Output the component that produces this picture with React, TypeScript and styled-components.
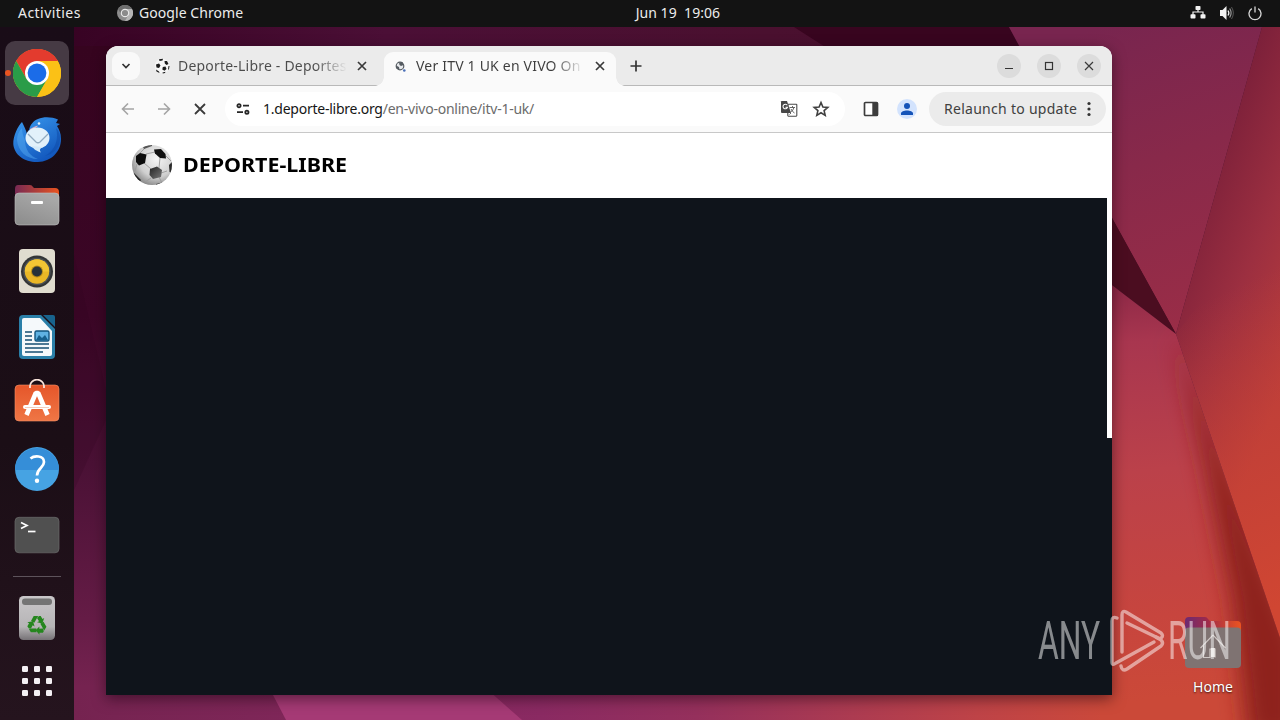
import React from "react";
import styled, { createGlobalStyle } from "styled-components";

const GlobalStyle = createGlobalStyle`
  * {
    box-sizing: border-box;
  }

  body {
    margin: 0;
    overflow: hidden;
    font-family: "Noto Sans", "Open Sans", sans-serif;
  }

  svg {
    display: block;
    flex-shrink: 0;
  }
`;

const Wallpaper = () => (
  <Backdrop viewBox="0 0 1280 720" preserveAspectRatio="none">
    <defs>
      <linearGradient id="wpTop" x1="0" x2="1" y1="0" y2="0">
        <stop offset="0" stopColor="#33001f" />
        <stop offset="0.3" stopColor="#4b0f36" />
        <stop offset="0.6" stopColor="#4a102f" />
        <stop offset="1" stopColor="#450f2b" />
      </linearGradient>
      <linearGradient id="wpLeft" x1="0" x2="0" y1="0" y2="1">
        <stop offset="0" stopColor="#36041f" />
        <stop offset="0.4" stopColor="#3b0626" />
        <stop offset="0.62" stopColor="#4a1135" />
        <stop offset="0.85" stopColor="#651c46" />
        <stop offset="0.95" stopColor="#752350" />
        <stop offset="1" stopColor="#752350" />
      </linearGradient>
      <linearGradient id="wpBottom" gradientUnits="userSpaceOnUse" x1="74" x2="1112" y1="0" y2="0">
        <stop offset="0" stopColor="#752350" />
        <stop offset="0.04" stopColor="#772452" />
        <stop offset="0.45" stopColor="#8a2a62" />
        <stop offset="0.6" stopColor="#95305c" />
        <stop offset="0.75" stopColor="#ac3b51" />
        <stop offset="0.87" stopColor="#be4347" />
        <stop offset="1" stopColor="#cb493a" />
      </linearGradient>
      <linearGradient id="wpPanel" gradientUnits="userSpaceOnUse" x1="1090" y1="30" x2="1190" y2="330">
        <stop offset="0" stopColor="#78254f" />
        <stop offset="0.45" stopColor="#88294a" />
        <stop offset="1" stopColor="#9a2d47" />
      </linearGradient>
      <linearGradient id="wpEast" gradientUnits="userSpaceOnUse" x1="1195" y1="190" x2="1340" y2="250">
        <stop offset="0" stopColor="#7c203a" />
        <stop offset="0.5" stopColor="#9c2f40" />
        <stop offset="1" stopColor="#b83c3c" />
      </linearGradient>
      <linearGradient id="wpEastLow" gradientUnits="userSpaceOnUse" x1="1185" y1="310" x2="1315" y2="590">
        <stop offset="0" stopColor="#cc4433" stopOpacity="0" />
        <stop offset="1" stopColor="#d04632" />
      </linearGradient>
      <linearGradient id="wpSouth" gradientUnits="userSpaceOnUse" x1="1120" y1="284" x2="1150" y2="700">
        <stop offset="0" stopColor="#8c2846" />
        <stop offset="0.14" stopColor="#a8364f" />
        <stop offset="0.45" stopColor="#bb414a" />
        <stop offset="0.8" stopColor="#c7453e" />
        <stop offset="1" stopColor="#cb4938" />
      </linearGradient>
      <clipPath id="southClip">
        <path d="M1100 276L1176 334L1280 638V720H1100Z" />
      </clipPath>
      <filter id="soften" x="-50%" y="-20%" width="200%" height="140%">
        <feGaussianBlur stdDeviation="11" />
      </filter>
    </defs>
    <rect width="1280" height="720" fill="url(#wpTop)" />
    <rect x="74" y="46" width="60" height="674" fill="url(#wpLeft)" />
    <path d="M74 255L106 390V420L74 490Z" fill="#2c031d" opacity="0.2" />
    <rect x="74" y="690" width="1206" height="30" fill="url(#wpBottom)" />
    <path d="M273 695L286 720H522L488 690H271Z" fill="#a53a75" />
    <path d="M794 27L830 50H1022L1009 27Z" fill="#38051f" />
    <path d="M1009 27H1262L1176 334L1112 218Z" fill="url(#wpPanel)" />
    <path d="M1262 27H1280V638L1176 334Z" fill="url(#wpEast)" />
    <path d="M1176 334L1280 200V638Z" fill="url(#wpEastLow)" />
    <path d="M1100 196L1176 334L1100 276Z" fill="#4b0d20" />
    <path d="M1100 276L1176 334L1280 638V720H1100Z" fill="url(#wpSouth)" />
    <g clipPath="url(#southClip)">
      <path d="M1176 334L1300 650V740H1248L1232 600L1206 470Z" fill="#8e231b" filter="url(#soften)" />
    </g>
  </Backdrop>
);

const ChromeIcon = ({ size = 48 }: { size?: number }) => (
  <svg width={size} height={size} viewBox="0 0 48 48">
    <circle cx="24" cy="24" r="24" fill="#fbc116" />
    <path d="M24 24L3.2 12A24 24 0 0 1 44.8 12Z" fill="#e33b2e" />
    <path d="M24 12H44.8A24 24 0 0 0 3.2 12L13.6 30Z" fill="#e33b2e" />
    <path d="M3.2 12A24 24 0 0 0 24 48L34.4 30L24 24L13.6 30Z" fill="#2a9c48" />
    <path d="M24 48A24 24 0 0 0 44.8 12H24L34.4 30Z" fill="#fbc116" />
    <circle cx="24" cy="24" r="12" fill="#fff" />
    <circle cx="24" cy="24" r="9.4" fill="#1b6ce8" />
  </svg>
);

const GreyChromeIcon = () => (
  <svg width="16" height="16" viewBox="0 0 16 16">
    <circle cx="8" cy="8" r="8" fill="#8d8d8d" />
    <path d="M8 4H15A8 8 0 0 0 1 4L4.6 10Z" fill="#6e6e6e" />
    <path d="M8 16A8 8 0 0 0 15 4H8L11.4 10Z" fill="#b5b5b5" />
    <circle cx="8" cy="8" r="4.3" fill="#e8e8e8" />
    <circle cx="8" cy="8" r="3.1" fill="#8b8b8b" />
  </svg>
);

const ThunderbirdIcon = () => (
  <svg width="48" height="48" viewBox="0 -1 48 48">
    <defs>
      <linearGradient id="tb" x1="0" x2="0.6" y1="0" y2="1">
        <stop offset="0" stopColor="#3b9cf0" />
        <stop offset="1" stopColor="#1257bd" />
      </linearGradient>
    </defs>
    <path
      d="M9 6C5 10 0 20 .3 28C1 39 12 46.500 25 46C38 45.500 48 36 48 23C48 17 46 13 44 10L47 8L43 7L45 3.500C39 1 31 .5 25 3C20 5 17 9 16 14C15 15 14.500 16 14 18C13 14 11 10 9 6Z"
      fill="url(#tb)"
    />
    <path d="M4 24C5 35 13 43 25 43C17 40 12 34 12 24C10 20 9 16 9 12C6 15 4 19 4 24Z" fill="#5cb0f5" opacity="0.45" />
    <path d="M43 12C46 22 43 34 32 40C41 38 47 31 47 23C47 18 46 15 43 12Z" fill="#0e4aa8" opacity="0.5" />
    <path d="M17 13C20 12 23 9 25 10C22 12 21 14 17 15Z" fill="#ddb1c9" />
    <circle cx="26" cy="7.500" r="1.300" fill="#e3f1fb" />
    <ellipse cx="24.500" cy="22" rx="12" ry="10.500" fill="#e2f1fa" />
    <path d="M19 30C21 34 24 35 28 36.500C26 33.500 27 32.500 30 31Z" fill="#d2e9f8" />
    <path d="M15 18L23 26Q25 27.500 27 26L35 18" fill="none" stroke="#91abc0" strokeWidth="1.300" />
  </svg>
);

const FolderIcon = () => (
  <svg width="48" height="48" viewBox="0 0 48 48">
    <defs>
      <linearGradient id="fBack" x1="0" x2="1">
        <stop offset="0" stopColor="#772953" />
        <stop offset="1" stopColor="#e95420" />
      </linearGradient>
      <linearGradient id="fFront" x1="0" x2="0.5" y1="1" y2="0">
        <stop offset="0" stopColor="#8b8b8b" />
        <stop offset="1" stopColor="#a8a8a8" />
      </linearGradient>
    </defs>
    <path d="M5 4H17Q19 4 20 6L21 7H42Q46 7 46 11V20H2V8Q2 4 5 4Z" fill="url(#fBack)" />
    <rect x="2" y="12" width="44" height="32" rx="4" fill="url(#fFront)" stroke="#c0c0c0" strokeWidth="0.600" />
    <rect x="18" y="20" width="12" height="3" rx="1" fill="#fff" />
  </svg>
);

const SpeakerIcon = () => (
  <svg width="48" height="48" viewBox="0 0 48 48">
    <rect x="6" y="2" width="36" height="44" rx="4" fill="#e0dccf" />
    <circle cx="24" cy="24.500" r="16" fill="#333536" />
    <circle cx="24" cy="24.500" r="13.800" fill="#4b5054" />
    <circle cx="24" cy="24.500" r="12.200" fill="#eab726" />
    <path d="M11.800 24.500A12.200 12.200 0 0 1 36.200 24.500Z" fill="#f2c534" />
    <circle cx="24" cy="24.500" r="6" fill="#b38a1b" />
    <circle cx="24" cy="24.500" r="5" fill="#27323a" />
  </svg>
);

const WriterIcon = () => (
  <svg width="48" height="48" viewBox="0 0 48 48">
    <path d="M10 2H28L42 16V42Q42 46 38 46H10Q6 46 6 42V6Q6 2 10 2Z" fill="#2a7fa8" />
    <path d="M11 5H27L39 18V41Q39 43 37 43H11Q9 43 9 41V7Q9 5 11 5Z" fill="#f5f9fb" />
    <path d="M30 2H40Q42 2 42 4V14Z" fill="#18638d" />
    <rect x="22" y="18" width="14" height="10" rx="1.500" fill="#5fb2e2" stroke="#12557f" strokeWidth="1.400" />
    <path d="M23 27L26 22L29 25L32 22L35 27Z" fill="#17608c" />
    <path d="M12 19H19M12 23H19M12 27H19M12 31H36M12 35H36M12 39H30" stroke="#164f73" strokeWidth="1.700" />
  </svg>
);

const SoftwareIcon = () => (
  <svg width="48" height="48" viewBox="0 0 48 48">
    <defs>
      <linearGradient id="bag" x1="0" x2="0" y1="0" y2="1">
        <stop offset="0" stopColor="#e5562a" />
        <stop offset="1" stopColor="#ef7645" />
      </linearGradient>
    </defs>
    <rect x="2" y="6" width="44" height="36" rx="4" fill="url(#bag)" stroke="#f39068" strokeWidth="0.600" />
    <path d="M17 9V7A7 6.300 0 0 1 31 7V9" fill="none" stroke="#f8e3da" strokeWidth="1.800" />
    <path d="M13.500 36L22.800 14H25.200L34.500 36" fill="none" stroke="#fff" strokeWidth="4.600" strokeLinejoin="bevel" />
    <rect x="10" y="26" width="28" height="4" rx="2" fill="#fff" />
    <path d="M12 28.500H36" stroke="#f1b7a0" strokeWidth="0.700" />
  </svg>
);

const HelpIcon = () => (
  <svg width="48" height="48" viewBox="0 0 48 48">
    <circle cx="24" cy="24" r="22" fill="#46a3e3" />
    <path d="M2 25A22 22 0 0 1 46 25Z" fill="#358ed8" />
    <path d="M17.500 13.500C21 10.500 31 10 31 17C31 23 24 23 24 30.500" fill="none" stroke="#fff" strokeWidth="2.700" />
    <circle cx="24" cy="35.800" r="2.200" fill="#fff" />
  </svg>
);

const TerminalIcon = () => (
  <svg width="48" height="48" viewBox="0 0 48 48">
    <rect x="2" y="6.300" width="44" height="35.500" rx="4" fill="#505050" stroke="#6c6c6c" strokeWidth="0.700" />
    <path d="M8 11.500L14 14.500L8 17.500" fill="none" stroke="#fff" strokeWidth="1.700" />
    <path d="M15 20.500H22.500" stroke="#fff" strokeWidth="1.700" />
  </svg>
);

const TrashIcon = () => (
  <svg width="48" height="48" viewBox="0 0 48 48">
    <defs>
      <linearGradient id="bin" x1="0" x2="0" y1="0" y2="1">
        <stop offset="0" stopColor="#c9c7c9" />
        <stop offset="0.7" stopColor="#b6b4b6" />
        <stop offset="1" stopColor="#767276" />
      </linearGradient>
    </defs>
    <rect x="6" y="1" width="36" height="44" rx="4.500" fill="url(#bin)" />
    <rect x="9" y="3.500" width="30" height="6.500" rx="3" fill="#747474" />
    <g transform="translate(24 30)" fill="#25861e">
      {[0, 120, 240].map((angle) => (
        <g key={angle} transform={`rotate(${angle})`}>
          <path d="M-6 -4L-3.300 -9H1.200L-2.700 -2.300Z" />
          <path d="M2 -9H3.700L5.500 -6L7.200 -7L5.300 -1.500L0 -2.800L2 -3.800L0 -7Z" />
        </g>
      ))}
    </g>
  </svg>
);

const AppsIcon = () => (
  <svg width="30" height="30" viewBox="0 0 30 30" fill="#f4f0f4">
    {[0, 12, 24].map((y) =>
      [0, 12, 24].map((x) => (
        <rect key={`${x}-${y}`} x={x} y={y} width="6" height="6" rx="1.300" />
      ))
    )}
  </svg>
);

const FootballIcon = () => (
  <svg width="42" height="42" viewBox="0 0 42 42">
    <defs>
      <radialGradient id="ball" cx="0.62" cy="0.35" r="0.75">
        <stop offset="0" stopColor="#f5f5f5" />
        <stop offset="0.6" stopColor="#cfcfcf" />
        <stop offset="1" stopColor="#777" />
      </radialGradient>
      <linearGradient id="patch" x1="0" x2="1" y1="0" y2="1">
        <stop offset="0" stopColor="#222" />
        <stop offset="1" stopColor="#777" />
      </linearGradient>
      <clipPath id="ballClip">
        <circle cx="21" cy="21" r="20" />
      </clipPath>
    </defs>
    <circle cx="21" cy="21" r="20" fill="url(#ball)" />
    <g clipPath="url(#ballClip)">
      <path
        d="M15 10L24 8M13 19L20 25M6 20L4 27M29 14L28 24M35 12L40 17M30 29L36 27M20 34L14 38M28 33L31 39M9 9L14 4"
        stroke="#9a9a9a"
        strokeWidth="0.900"
      />
      <path d="M5 12L9 9L15.500 10.500L14 19L8 21.500L5 18Z" fill="#0c0c0c" />
      <path d="M23 5.500L30 5L34.500 10L35 14.500L29 14L24 9.500Z" fill="#111" />
      <path d="M19 25L26 22.500L31 26L30 33L22 35L18.500 31Z" fill="url(#patch)" />
      <path d="M38 21L41 18V29L38.500 28Z" fill="#2c2c2c" />
      <path d="M3 29L10 36L8 39L1 32Z" fill="#222" />
      <path d="M12 3L17 1L21 0V2L13 5Z" fill="#555" />
      <path d="M25 40L31 38.500V42H25Z" fill="#444" />
    </g>
  </svg>
);

const SmallBallIcon = () => (
  <svg width="16" height="16" viewBox="0 0 16 16">
    <circle cx="8" cy="8" r="7.300" fill="#f6f6f6" />
    <g fill="#1c1c1c">
      <path d="M2 6.500L5 5.500L6.500 7.500L5 10L2.500 9.500Z" />
      <path d="M5 1.300L9 .8L8.500 2.500L5.500 3Z" />
      <path d="M10.500 3L13 3L14.500 6L12.500 7L10.800 5.500Z" />
      <path d="M8.800 9L11.500 8.500L12.500 11L10.500 12.800L8.300 11.500Z" />
      <path d="M14.500 8L15.500 8L15 11L14 12Z" />
      <path d="M2 11.500L5 13.500L5.500 15L2.500 13.500Z" />
      <path d="M8.500 14.500L11.500 13.800L11 15L8.800 15.500Z" />
    </g>
  </svg>
);

const GlobeIcon = () => (
  <svg width="12" height="12" viewBox="0 0 12 12">
    <circle cx="5" cy="6" r="3.800" fill="#e8eaed" stroke="#555b61" strokeWidth="1.200" />
    <path d="M1 5.500L4 7L4.500 9.500L1.500 8.500ZM4 2.500L7.500 2L8.500 5L6 6L4.500 5Z" fill="#555b61" />
    <circle cx="9.300" cy="10.500" r="1.300" fill="#4a6fb8" />
  </svg>
);

const CrossIcon = ({ size, width = 1.7 }: { size: number; width?: number }) => (
  <svg width={size} height={size} viewBox={`0 0 ${size} ${size}`}>
    <path d={`M1 1L${size - 1} ${size - 1}M${size - 1} 1L1 ${size - 1}`} stroke="#3a3a3a" strokeWidth={width} />
  </svg>
);

const ArrowIcon = ({ flip }: { flip?: boolean }) => (
  <svg width="14" height="14" viewBox="0 0 14 14">
    <path
      d="M13 7H2M7 1.500L1.500 7L7 12.500"
      transform={flip ? "rotate(180 7 7)" : undefined}
      fill="none"
      stroke="#a4a4a4"
      strokeWidth="1.600"
    />
  </svg>
);

const TuneIcon = () => (
  <svg width="14" height="12" viewBox="0 0 14 12" fill="none" stroke="#262626" strokeWidth="1.800">
    <circle cx="3" cy="2.700" r="1.600" />
    <path d="M7 2.700H13M1 9.200H7" />
    <circle cx="10.900" cy="9.200" r="1.600" />
  </svg>
);

const TranslateIcon = () => (
  <svg width="18" height="18" viewBox="0 0 18 18">
    <rect x="7.800" y="4.200" width="9" height="12" rx="0.600" fill="#fff" stroke="#4a4a4a" strokeWidth="1.100" />
    <path d="M1.500 1H7L11 13H2Q1 13 1 12V1.500Z" fill="#474747" />
    <path d="M7.300 5.300A2.300 2.300 0 1 0 7.500 7.300H5.500" fill="none" stroke="#fff" strokeWidth="1.100" />
    <path d="M9.500 7.500H15M12.500 6V7.500M14 7.500Q13 11 10.500 12M11 9Q12.500 12 14.500 13M9.500 14.500L11 13" fill="none" stroke="#555" strokeWidth="0.900" />
  </svg>
);

const StarIcon = () => (
  <svg width="18" height="18" viewBox="0 0 18 18">
    <path
      d="M9 2.500L10.900 7L15.800 7.400L12.100 10.600L13.200 15.400L9 12.800L4.800 15.400L5.900 10.600L2.200 7.400L7.100 7Z"
      fill="none"
      stroke="#404040"
      strokeWidth="1.600"
    />
  </svg>
);

const SidePanelIcon = () => (
  <svg width="16" height="16" viewBox="0 0 16 16">
    <rect x="1.500" y="1.500" width="13" height="13" rx="1" fill="#fff" stroke="#3c3c3c" strokeWidth="1.700" />
    <rect x="9.300" y="1.500" width="5.200" height="13" fill="#3c3c3c" />
  </svg>
);

const AvatarIcon = () => (
  <svg width="20" height="20" viewBox="0 0 20 20">
    <circle cx="10" cy="10" r="10" fill="#d3e3fd" />
    <circle cx="10" cy="7" r="3" fill="#1453b8" />
    <path d="M4 16V14.500C4 12.500 7 11.500 10 11.500S16 12.500 16 14.500V16Z" fill="#1453b8" />
  </svg>
);

const NetworkIcon = () => (
  <svg width="16" height="14" viewBox="0 0 16 14">
    <path d="M8 3V6M3 9V6H13V9" fill="none" stroke="#f2f2f2" strokeWidth="1.200" />
    <g fill="#f2f2f2">
      <rect x="5.500" y="0" width="5" height="4" rx="0.800" />
      <rect x="0.500" y="8.300" width="5" height="4.300" rx="0.800" />
      <rect x="10.500" y="8.300" width="5" height="4.300" rx="0.800" />
    </g>
  </svg>
);

const VolumeIcon = () => (
  <svg width="16" height="16" viewBox="0 0 16 16">
    <path d="M1 5H3.500L7.500 1V15L3.500 11H1Z" fill="#f2f2f2" />
    <path d="M9 5.500Q10.700 8 9 10.500" fill="none" stroke="#f2f2f2" strokeWidth="1.300" />
    <path d="M10.700 3.500Q13.500 8 10.700 12.500" fill="none" stroke="#9a9a9a" strokeWidth="1.200" />
    <path d="M12.500 2Q16.200 8 12.500 14" fill="none" stroke="#555" strokeWidth="1" />
  </svg>
);

const PowerIcon = () => (
  <svg width="14" height="15" viewBox="0 0 14 15" fill="none" stroke="#d8d8d8" strokeWidth="1.300">
    <path d="M3.800 2.600A6 6 0 1 0 10.200 2.600M7 0.500V6.500" />
  </svg>
);

const dockItems = [
  { name: "chrome", icon: <ChromeIcon />, active: true },
  { name: "thunderbird", icon: <ThunderbirdIcon /> },
  { name: "files", icon: <FolderIcon /> },
  { name: "rhythmbox", icon: <SpeakerIcon /> },
  { name: "writer", icon: <WriterIcon /> },
  { name: "software", icon: <SoftwareIcon /> },
  { name: "help", icon: <HelpIcon /> },
  { name: "terminal", icon: <TerminalIcon /> },
];

const App = () => {
  return (
    <Desktop>
      <GlobalStyle />
      <Wallpaper />

      <TopBar>
        <TopText $spacing={0.45}>Activities</TopText>
        <AppMenu>
          <GreyChromeIcon />
          <TopText $spacing={0.06}>Google Chrome</TopText>
        </AppMenu>
        <Clock>
          <TopText $spacing={0.05}>Jun 19&nbsp; 19:06</TopText>
        </Clock>
        <Tray>
          <NetworkIcon />
          <VolumeIcon />
          <PowerIcon />
        </Tray>
      </TopBar>

      <Workspace>
        <Dock>
          {dockItems.map((item) => (
            <DockItem key={item.name} $active={item.active}>
              {item.icon}
            </DockItem>
          ))}
          <DockDivider />
          <DockItem>
            <TrashIcon />
          </DockItem>
          <AppsButton>
            <AppsIcon />
          </AppsButton>
        </Dock>

        <Browser>
          <TabStrip>
            <TabSearch>
              <svg width="10" height="6" viewBox="0 0 10 6">
                <path d="M1.500 1L5 4.500L8.500 1" fill="none" stroke="#333" strokeWidth="1.700" />
              </svg>
            </TabSearch>
            <Tab>
              <SmallBallIcon />
              <TabTitle $color="#4b4b4b">Deporte-Libre - Deportes</TabTitle>
              <CrossIcon size={10} />
            </Tab>
            <Tab $active>
              <GlobeIcon />
              <TabTitle $color="#3c3c3c">Ver ITV 1 UK en VIVO On</TabTitle>
              <CrossIcon size={10} />
            </Tab>
            <NewTab>
              <svg width="12" height="12" viewBox="0 0 12 12">
                <path d="M6 0.500V11.500M0.500 6H11.500" stroke="#333" strokeWidth="1.700" />
              </svg>
            </NewTab>
            <WindowControls>
              <ControlButton>
                <svg width="10" height="10" viewBox="0 0 10 10">
                  <path d="M1 7.500H9" stroke="#333" strokeWidth="1.100" />
                </svg>
              </ControlButton>
              <ControlButton>
                <svg width="10" height="10" viewBox="0 0 10 10">
                  <rect x="1.500" y="1.500" width="7" height="7" fill="none" stroke="#333" strokeWidth="1.200" />
                </svg>
              </ControlButton>
              <ControlButton>
                <CrossIcon size={10} width={1.2} />
              </ControlButton>
            </WindowControls>
          </TabStrip>

          <Toolbar>
            <NavButtons>
              <ArrowIcon />
              <ArrowIcon flip />
              <CrossIcon size={12} width={1.8} />
            </NavButtons>
            <Omnibox>
              <TuneIcon />
              <Url>
                1.deporte-libre.org<UrlPath>/en-vivo-online/itv-1-uk/</UrlPath>
              </Url>
              <TranslateIcon />
              <StarIcon />
            </Omnibox>
            <ToolbarActions>
              <SidePanelIcon />
              <AvatarIcon />
            </ToolbarActions>
            <RelaunchButton>
              Relaunch to update
              <svg width="4" height="16" viewBox="0 0 4 16" fill="#333">
                <circle cx="2" cy="2.500" r="1.600" />
                <circle cx="2" cy="8" r="1.600" />
                <circle cx="2" cy="13.500" r="1.600" />
              </svg>
            </RelaunchButton>
          </Toolbar>

          <SiteHeader>
            <FootballIcon />
            <SiteName>DEPORTE-LIBRE</SiteName>
          </SiteHeader>
          <Page>
            <ScrollThumb />
          </Page>
        </Browser>
      </Workspace>

      <HomeShortcut>
        <svg width="56" height="52" viewBox="0 0 56 52">
          <defs>
            <linearGradient id="homeBack" x1="0" x2="1">
              <stop offset="0" stopColor="#6c2a72" />
              <stop offset="0.4" stopColor="#9e2a4a" />
              <stop offset="1" stopColor="#ec5420" />
            </linearGradient>
          </defs>
          <path d="M4 0H20Q22 0 23 2L25 4H52Q56 4 56 8V20H0V4Q0 0 4 0Z" fill="url(#homeBack)" />
          <rect y="10.500" width="56" height="40.500" rx="4" fill="#7f7372" />
          <path d="M15.500 31L28 18L40.500 31M18.500 28.500V40.500H25V32H30V40.500" fill="none" stroke="#cfc8c6" strokeWidth="1.200" />
          <rect x="26" y="31" width="4" height="9" fill="#e2dcda" />
        </svg>
        <HomeLabel>Home</HomeLabel>
      </HomeShortcut>

      <Watermark>
        <WatermarkWord>ANY</WatermarkWord>
        <svg width="56" height="64" viewBox="0 0 56 64" fill="none" stroke="#fff" strokeWidth="3.400" strokeLinejoin="round" strokeLinecap="round">
          <path d="M7 9Q2 7 2 12V53Q2 57 6 54L44 33" />
          <path d="M12 43V6Q12 1 16 3L51 24Q54 27 51 29Q49 30 46 28L17 14" />
          <path d="M11 57Q12 63 17 60L51 37Q54 34 51 31L46 28" />
        </svg>
        <WatermarkWord>RUN</WatermarkWord>
      </Watermark>
    </Desktop>
  );
};

const Desktop = styled.div`
  position: relative;
  display: flex;
  flex-direction: column;
  width: 1280px;
  height: 720px;
  overflow: hidden;
`;

const Backdrop = styled.svg`
  position: absolute;
  inset: 0;
  width: 100%;
  height: 100%;
`;

const TopBar = styled.header`
  position: relative;
  display: grid;
  grid-template-columns: 99px 1fr 1fr 1fr;
  align-items: center;
  height: 27px;
  padding: 0 18px 1px;
  background: #131313;
`;

const TopText = styled.span<{ $spacing: number }>`
  color: #ececec;
  font-size: 14px;
  line-height: 26px;
  letter-spacing: ${(p) => p.$spacing}px;
  white-space: nowrap;
`;

const AppMenu = styled.div`
  display: flex;
  align-items: center;
  gap: 6px;
`;

const Clock = styled.div`
  padding-left: 137px;
`;

const Tray = styled.div`
  display: flex;
  justify-content: flex-end;
  align-items: center;
  gap: 13px;
`;

const Workspace = styled.main`
  position: relative;
  display: flex;
  flex: 1;
  align-items: stretch;
`;

const Dock = styled.nav`
  display: flex;
  flex-direction: column;
  align-items: center;
  gap: 2px;
  width: 74px;
  height: 693px;
  padding-top: 14px;
  background: linear-gradient(#190c17, #1b0e16 60%, #25141e);
`;

const DockItem = styled.div<{ $active?: boolean }>`
  position: relative;
  display: flex;
  flex-shrink: 0;
  justify-content: center;
  align-items: center;
  width: 64px;
  height: 64px;
  border-radius: 10px;
  background: ${(p) => (p.$active ? "#463a44" : "transparent")};

  &::before {
    content: "";
    display: ${(p) => (p.$active ? "block" : "none")};
    position: absolute;
    left: 0;
    top: 29px;
    width: 6px;
    height: 6px;
    border-radius: 50%;
    background: #e95420;
  }
`;

const AppsButton = styled.div`
  padding-top: 13px;
`;

const DockDivider = styled.div`
  flex-shrink: 0;
  width: 48px;
  height: 1px;
  margin: 7px 0 8px;
  background: #5d535b;
`;

const Browser = styled.section`
  display: flex;
  flex-direction: column;
  width: 1006px;
  height: 649px;
  margin: 19px 0 0 32px;
  border-radius: 12px 12px 0 0;
  background: #fff;
  overflow: hidden;
  box-shadow: 0 4px 14px rgba(20, 0, 12, 0.5);
`;

const TabStrip = styled.div`
  display: flex;
  align-items: flex-end;
  height: 40px;
  padding-left: 6px;
  background: linear-gradient(#ebebeb 39px, #b9b9b9 39px);
`;

const TabSearch = styled.div`
  display: flex;
  justify-content: center;
  align-items: center;
  width: 28px;
  height: 28px;
  margin-bottom: 6px;
  border-radius: 9px;
  background: #f9f9f9;
`;

const Tab = styled.div<{ $active?: boolean }>`
  position: relative;
  display: flex;
  align-items: center;
  gap: ${(p) => (p.$active ? 9 : 8)}px;
  width: ${(p) => (p.$active ? 232 : 244)}px;
  height: 34px;
  padding: 0 ${(p) => (p.$active ? "11px 6px 11px" : "17px 6px 14px")};
  border-radius: 9px 9px 0 0;
  background: ${(p) => (p.$active ? "#fafafa" : "transparent")};

  &::before,
  &::after {
    content: "";
    display: ${(p) => (p.$active ? "block" : "none")};
    position: absolute;
    bottom: 0;
    width: 9px;
    height: 9px;
  }

  &::before {
    left: -9px;
    background: radial-gradient(circle at 0 0, transparent 8.5px, #fafafa 9px);
  }

  &::after {
    right: -9px;
    background: radial-gradient(circle at 100% 0, transparent 8.5px, #fafafa 9px);
  }
`;

const TabTitle = styled.span<{ $color: string }>`
  flex: 1;
  white-space: nowrap;
  font-size: 14px;
  line-height: 22px;
  letter-spacing: 0.2px;
  color: transparent;
  background: linear-gradient(90deg, ${(p) => p.$color} 80%, transparent 99%);
  background-clip: text;
`;

const NewTab = styled.div`
  padding: 0 0 14px 14px;
`;

const WindowControls = styled.div`
  display: flex;
  gap: 16px;
  margin: 0 11px 8px auto;
`;

const ControlButton = styled.div`
  display: flex;
  justify-content: center;
  align-items: center;
  width: 24px;
  height: 24px;
  border-radius: 50%;
  background: #dcdcdc;
`;

const Toolbar = styled.div`
  display: flex;
  align-items: center;
  height: 47px;
  padding: 0 6px 1px 15px;
  border-bottom: 1px solid #c8c8c8;
  background: #fafafa;
`;

const NavButtons = styled.div`
  display: flex;
  align-items: center;
  gap: 22px;
  width: 104px;

  svg:last-child {
    margin-left: 1px;
  }
`;

const Omnibox = styled.div`
  display: flex;
  align-items: center;
  width: 620px;
  height: 34px;
  padding: 0 15px 0 11px;
  border-radius: 17px;
  background: #fff;

  svg + svg {
    margin-left: 14px;
  }
`;

const Url = styled.span`
  flex: 1;
  padding-left: 13px;
  font-size: 14px;
  letter-spacing: -0.24px;
  color: #161616;
  white-space: nowrap;
`;

const UrlPath = styled.span`
  color: #6b6b6b;
`;

const ToolbarActions = styled.div`
  display: flex;
  align-items: center;
  gap: 18px;
  padding: 0 12px 0 18px;
`;

const RelaunchButton = styled.button`
  display: flex;
  justify-content: space-between;
  align-items: center;
  width: 177px;
  height: 34px;
  padding: 0 15px;
  border: 0;
  border-radius: 17px;
  background: #ebebeb;
  color: #404040;
  font: 14px "Noto Sans", sans-serif;
  letter-spacing: 0.28px;
  white-space: nowrap;
`;

const SiteHeader = styled.div`
  display: flex;
  align-items: center;
  gap: 10px;
  height: 65px;
  padding: 0 0 1px 25px;
  background: #fff;
`;

const SiteName = styled.h1`
  margin: 0;
  font-size: 19.500px;
  line-height: 28px;
  font-weight: 700;
  color: #000;
  transform: scaleX(1.1);
  transform-origin: 0 50%;
`;

const Page = styled.div`
  display: flex;
  justify-content: flex-end;
  flex: 1;
  background: #0f141b;
`;

const ScrollThumb = styled.div`
  width: 5px;
  height: 240px;
  background: #fff;
`;

const HomeShortcut = styled.div`
  position: absolute;
  left: 1185px;
  top: 617px;
  display: flex;
  flex-direction: column;
  align-items: center;
  width: 56px;
`;

const HomeLabel = styled.span`
  margin-top: 8px;
  font-size: 14px;
  line-height: 20px;
  color: #fff;
  text-shadow: 0 1px 2px rgba(0, 0, 0, 0.7);
`;

const Watermark = styled.div`
  position: absolute;
  left: 1038px;
  top: 609px;
  display: flex;
  align-items: center;
  opacity: 0.5;

  svg {
    margin: 0 2px 0 6px;
  }
`;

const WatermarkWord = styled.span`
  width: 66px;
  padding-bottom: 1px;
  font: 400 53px/62px Roboto, sans-serif;
  color: #fff;
  white-space: nowrap;
  transform: scaleX(0.6);
  transform-origin: 0 50%;
`;

export default App;
